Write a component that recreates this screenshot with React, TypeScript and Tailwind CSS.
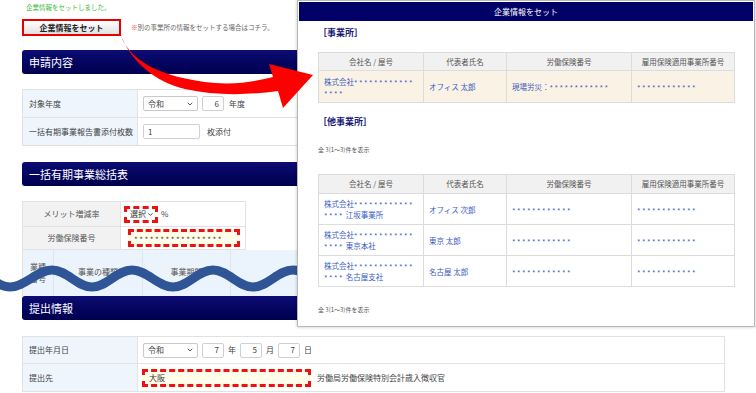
import { ChevronDown } from "lucide-react";
import type { ReactNode } from "react";

// asterisks in the reference are wider and sit lower than Noto's, so adjust the runs
function Masked({ text }: { text: string }) {
  return (
    <>
      {text.split(/(\*+)/).map((part, i) =>
        part.startsWith("*") ? (
          <span key={i} className="inline-block translate-y-[1px] leading-[7px] tracking-[1.5px]">
            {part}
          </span>
        ) : (
          <span key={i}>{part}</span>
        ),
      )}
    </>
  );
}

function Sel({ label, w }: { label: string; w: string }) {
  return (
    <div
      className={`flex h-[15px] items-center justify-between rounded-[2px] border border-[#c9c9c9] bg-white pl-[4px] pr-[3px] ${w}`}
    >
      <span>{label}</span>
      <ChevronDown className="h-[8px] w-[8px] text-[#555]" strokeWidth={3} />
    </div>
  );
}

function Field({ value, w, right }: { value: string; w: string; right?: boolean }) {
  return (
    <div
      className={`flex h-[15px] items-center rounded-[2px] border border-[#d0d0d0] bg-white px-[4px] ${w} ${right ? "justify-end" : ""}`}
    >
      {value}
    </div>
  );
}

function SectionHeader({ title }: { title: string }) {
  return (
    <div className="flex h-[24px] items-center rounded-[3px] bg-linear-to-b from-[#0d0d74] to-[#00004f] pl-[7px] text-[11px] text-white">
      {title}
    </div>
  );
}

function LabelRow({ label, h, children }: { label: string; h: string; children: ReactNode }) {
  return (
    <div className={`flex border-b border-[#e2e2e2] last:border-b-0 ${h}`}>
      <div className="flex w-[115px] shrink-0 items-center border-r border-[#e2e2e2] bg-[#eef5fc] pl-[6px]">
        {label}
      </div>
      <div className="flex items-center gap-[4px] pl-[5px]">{children}</div>
    </div>
  );
}

type Row = { name: string[]; rep: string; rodo: string; koyo: string };

const mainRows: Row[] = [
  { name: ["株式会社************", "****"], rep: "オフィス 太郎", rodo: "現場労災：************", koyo: "************" },
];

const otherRows: Row[] = [
  { name: ["株式会社************", "**** 江坂事業所"], rep: "オフィス 次郎", rodo: "************", koyo: "************" },
  { name: ["株式会社************", "**** 東京本社"], rep: "東京 太郎", rodo: "************", koyo: "************" },
  { name: ["株式会社************", "**** 名古屋支社"], rep: "名古屋 太郎", rodo: "************", koyo: "************" },
];

function OfficeTable({ rows, rowBg, headH, rowH }: { rows: Row[]; rowBg: string; headH: string; rowH: string }) {
  const cell = "border border-[#dcdcdc] pl-[5px] text-left align-middle leading-[11px] text-[#3b5cc4]";
  return (
    <table className="w-[416px] table-fixed border-collapse text-[7.5px]">
      <colgroup>
        <col className="w-[105px]" />
        <col className="w-[83px]" />
        <col className="w-[125px]" />
        <col className="w-[103px]" />
      </colgroup>
      <thead>
        <tr className={`bg-[#f1f1f1] text-[#555] ${headH}`}>
          <th className="border border-[#dcdcdc] font-normal">会社名 / 屋号</th>
          <th className="border border-[#dcdcdc] font-normal">代表者氏名</th>
          <th className="border border-[#dcdcdc] font-normal">労働保険番号</th>
          <th className="border border-[#dcdcdc] font-normal">雇用保険適用事業所番号</th>
        </tr>
      </thead>
      <tbody>
        {rows.map((r, i) => (
          <tr key={i} className={`${rowBg} ${rowH}`}>
            <td className={cell}>
              <Masked text={r.name[0]} />
              <br />
              <Masked text={r.name[1]} />
            </td>
            <td className={cell}>{r.rep}</td>
            <td className={cell}>
              <Masked text={r.rodo} />
            </td>
            <td className={cell}>
              <Masked text={r.koyo} />
            </td>
          </tr>
        ))}
      </tbody>
    </table>
  );
}

function Modal() {
  return (
    <div className="absolute left-[297px] top-0 z-20 h-[327px] w-[458px] border border-[#b9b9b9] bg-white p-[1px] shadow-[0_0_3px_rgba(0,0,0,0.25)]">
      <div className="flex h-[19px] items-center justify-center bg-[#000066] text-[8px] text-white">
        企業情報をセット
      </div>
      <div className="px-[19px]">
        <p className="mt-[5px] h-[14px] text-[9px] font-bold leading-[14px] text-[#1a1a78]">［事業所］</p>
        <div className="mt-[12px]">
          <OfficeTable rows={mainRows} rowBg="bg-[#faf2e4]" headH="h-[18px]" rowH="h-[32px]" />
        </div>
        <p className="mt-[12px] h-[14px] text-[9px] font-bold leading-[14px] text-[#1a1a78]">［他事業所］</p>
        <p className="mt-[16px] h-[10px] text-[6px] leading-[10px] text-[#555]">全 3(1～3)件を表示</p>
        <div className="mt-[19px]">
          <OfficeTable rows={otherRows} rowBg="bg-white" headH="h-[19px]" rowH="h-[31px]" />
        </div>
        <p className="mt-[18px] h-[10px] text-[6px] leading-[10px] text-[#555]">全 3(1～3)件を表示</p>
      </div>
    </div>
  );
}

export default function App() {
  return (
    <div className="relative h-[393px] w-[756px] overflow-hidden bg-white font-['Noto_Sans_CJK_JP','Noto_Sans',sans-serif] text-[8px] text-[#444]">
      <div className="ml-[22px] w-[703px]">
        <p className="h-[14px] pl-[4px] text-[6.5px] leading-[14px] text-[#3cb93c]">企業情報をセットしました。</p>

        <div className="mt-[5px] flex h-[17px] items-center">
          <div className="flex h-[17px] w-[99px] items-center justify-center border-2 border-[#e60000] bg-linear-to-b from-white to-[#e2e2e2] text-[8px] font-bold text-[#222]">
            企業情報をセット
          </div>
          <p className="ml-[10px] text-[6.5px] text-[#666]">
            <span className="text-[#e33]">※</span>別の事業所の情報をセットする場合はコチラ。
          </p>
        </div>

        <div className="mt-[14px]">
          <SectionHeader title="申請内容" />
        </div>

        <div className="mt-[15px] border border-[#e2e2e2]">
          <LabelRow label="対象年度" h="h-[28px]">
            <Sel label="令和" w="w-[55px]" />
            <Field value="6" w="w-[22px]" right />
            <span className="ml-[1px]">年度</span>
          </LabelRow>
          <LabelRow label="一括有期事業報告書添付枚数" h="h-[27px]">
            <Field value="1" w="w-[57px]" />
            <span className="ml-[3px]">枚添付</span>
          </LabelRow>
        </div>

        <div className="mt-[16px]">
          <SectionHeader title="一括有期事業総括表" />
        </div>

        <div className="mt-[15px] w-[224px] border border-[#e2e2e2] border-b-0">
          <div className="flex h-[25px] border-b border-[#e2e2e2]">
            <div className="flex w-[98px] items-center justify-center border-r border-[#e2e2e2] bg-[#f2f2f2] text-[#555]">
              メリット増減率
            </div>
            <div className="flex items-center gap-[3px] pl-[3px]">
              <div className="flex h-[17px] w-[34px] items-center justify-between border-[3px] border-dashed border-[#ee1111] bg-white pl-[3px] pr-[1px] text-[#333]">
                <span>選択</span>
                <ChevronDown className="h-[7px] w-[7px]" strokeWidth={3} />
              </div>
              <span>%</span>
            </div>
          </div>
          <div className="flex h-[23px] border-b border-[#e2e2e2]">
            <div className="flex w-[98px] items-center justify-center border-r border-[#e2e2e2] bg-[#f2f2f2] text-[#555]">
              労働保険番号
            </div>
            <div className="flex items-center pl-[7px]">
              <div className="flex h-[18px] w-[112px] items-center border-[3px] border-dashed border-[#ee1111] bg-[#fffde9] pl-[3px] text-[#444]">
                <Masked text="*****************" />
              </div>
            </div>
          </div>
        </div>

        <div className="flex h-[46px] border-l border-[#e2e2e2] bg-[#ebf3fc] text-[#555]">
          <div className="flex w-[31px] items-start justify-center border-r border-[#dde6f0] pt-[11px] leading-[12px]">
            業種
            <br />
            番号
          </div>
          <div className="flex w-[89px] items-center justify-center border-r border-[#dde6f0] pb-[2px]">事業の種類</div>
          <div className="flex w-[88px] items-center justify-center border-r border-[#dde6f0] pb-[2px]">事業期間</div>
          <div className="flex-1" />
        </div>

        <SectionHeader title="提出情報" />

        <div className="mt-[16px] border border-[#e2e2e2]">
          <LabelRow label="提出年月日" h="h-[27px]">
            <Sel label="令和" w="w-[55px]" />
            <Field value="7" w="w-[22px]" right />
            <span>年</span>
            <Field value="5" w="w-[22px]" right />
            <span>月</span>
            <Field value="7" w="w-[22px]" right />
            <span>日</span>
          </LabelRow>
          <LabelRow label="提出先" h="h-[27px]">
            <div className="-ml-[1px] flex h-[18px] w-[169px] items-center border-[3px] border-dashed border-[#ee1111] bg-[#fffde9] pl-[4px] text-[#333]">
              大阪
            </div>
            <span className="ml-[2px]">労働局労働保険特別会計歳入徴収官</span>
          </LabelRow>
        </div>
      </div>

      <svg className="pointer-events-none absolute left-0 top-0 z-10" width="300" height="393" viewBox="0 0 300 393">
        <path
          d="M -30 270 C -15 270 -5 287 10 287 C 25 287 37 270 52 270 C 67 270 77 287 92 287 C 107 287 117 270 132 270 C 147 270 158 287 173 287 C 188 287 198 270 213 270 C 228 270 238 287 253 287 C 268 287 278 270 293 270 C 308 270 318 287 333 287"
          fill="none"
          stroke="#2f5597"
          strokeWidth="9"
        />
      </svg>

      <Modal />

      <svg className="pointer-events-none absolute left-0 top-0 z-30" width="756" height="393" viewBox="0 0 756 393">
        <path
          d="M 121 36 C 130 60 160 78 215 83 C 240 85 260 80 273 77 L 269 64 L 313 75 L 283 108 L 278 91 C 250 95 215 96 185 89 C 155 82 133 62 123 40 Z"
          fill="#ff0000"
        />
      </svg>
    </div>
  );
}
